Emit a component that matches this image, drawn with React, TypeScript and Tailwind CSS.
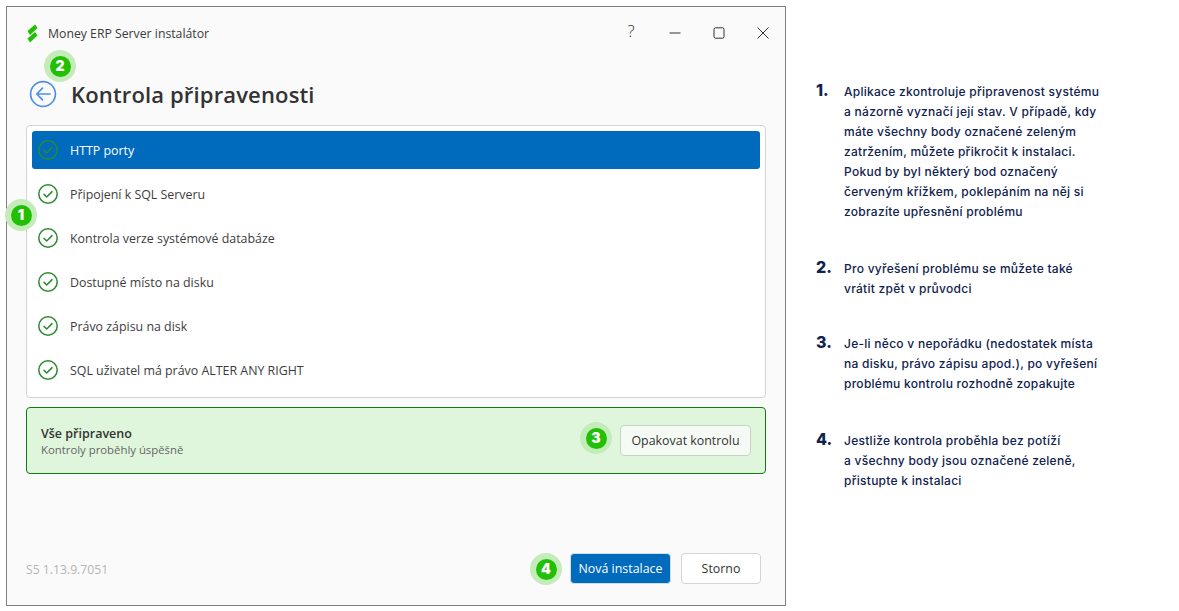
import React from "react";

const ui = "font-['Open_Sans','Noto_Sans',sans-serif]";

function Check() {
  return (
    <svg width="20" height="20" viewBox="0 0 20 20" fill="none" className="shrink-0">
      <circle cx="10" cy="10" r="9.2" stroke="#2b8a2f" strokeWidth="1.5" />
      <path d="M6 10.4l2.7 2.6L14 7.6" stroke="#2b8a2f" strokeWidth="1.5" strokeLinecap="round" strokeLinejoin="round" />
    </svg>
  );
}

function Badge({ n, className }: { n: string; className: string }) {
  return (
    <div className={`absolute w-8 h-8 rounded-full bg-[#c4ecba] flex items-center justify-center ${className}`}>
      <div className="w-[21px] h-[21px] rounded-full bg-[#22c004] flex items-center justify-center text-white text-[14px] font-black leading-none font-['Inter',sans-serif]">
        {n}
      </div>
    </div>
  );
}

const rows = [
  "HTTP porty",
  "Připojení k SQL Serveru",
  "Kontrola verze systémové databáze",
  "Dostupné místo na disku",
  "Právo zápisu na disk",
  "SQL uživatel má právo ALTER ANY RIGHT",
];

const notes: { n: string; lines: string[]; cls: string }[] = [
  {
    n: "1.",
    cls: "mt-[76px]",
    lines: [
      "Aplikace zkontroluje připravenost systému",
      "a názorně vyznačí její stav. V případě, kdy",
      "máte všechny body označené zeleným",
      "zatržením, můžete přikročit k instalaci.",
      "Pokud by byl některý bod označený",
      "červeným křížkem, poklepáním na něj si",
      "zobrazíte upřesnění problému",
    ],
  },
  { n: "2.", cls: "mt-[37px]", lines: ["Pro vyřešení problému se můžete také", "vrátit zpět v průvodci"] },
  {
    n: "3.",
    cls: "mt-[35px]",
    lines: ["Je-li něco v nepořádku (nedostatek místa", "na disku, právo zápisu apod.), po vyřešení", "problému kontrolu rozhodně zopakujte"],
  },
  {
    n: "4.",
    cls: "mt-[37px]",
    lines: ["Jestliže kontrola proběhla bez potíží", "a všechny body jsou označené zeleně,", "přistupte k instalaci"],
  },
];

export default function App() {
  return (
    <div className={`relative w-[1179px] h-[611px] bg-white overflow-hidden flex items-start pl-[6px] pt-[6px] ${ui}`}>
      <div className="relative w-[780px] h-[600px] shrink-0 border border-[#7f7f7f] bg-[#fafafa] flex flex-col pl-[19px] pr-[19px]">
        <div className="flex items-center h-[36px] mt-[9px] text-[#333]">
          <svg width="12" height="20" viewBox="0 0 12 20" className="shrink-0 ml-[1px]">
            <path d="M0.5 7L8 0.5 10.5 4 3 11Z" fill="#22c004" />
            <path d="M0.5 14.5L8 8 10.5 11.5 3 18.5Z" fill="#22c004" />
          </svg>
          <span className="ml-[9px] text-[12.25px] leading-none text-[#3a3a3a]">Money ERP Server instalátor</span>
          <div className="ml-auto flex items-center h-[30px] mr-[-19px]">
            <span className="w-[44px] text-center text-[17px] font-light leading-none text-[#333] mt-[-8px]">?</span>
            <div className="w-[44px] flex justify-center mt-[-3px]">
              <svg width="12" height="12" viewBox="0 0 12 12"><path d="M0.5 6h11" stroke="#333" strokeWidth="1" /></svg>
            </div>
            <div className="w-[44px] flex justify-center mt-[-3px]">
              <svg width="12" height="12" viewBox="0 0 12 12"><rect x="1" y="0.8" width="10" height="10.4" rx="1.5" fill="none" stroke="#333" strokeWidth="1" /></svg>
            </div>
            <div className="w-[44px] flex justify-center mt-[-3px]">
              <svg width="12" height="12" viewBox="0 0 12 12"><path d="M0.5 0.5l11 11M11.5 0.5l-11 11" stroke="#333" strokeWidth="1" /></svg>
            </div>
          </div>
        </div>

        <div className="flex items-center mt-[22px] h-[40px]">
          <svg width="28" height="28" viewBox="0 0 28 28" fill="none" className="ml-[3px] shrink-0">
            <circle cx="14" cy="14" r="12.4" stroke="#4f8fe6" strokeWidth="1.7" />
            <path d="M21 14H8M13.5 8.2L7.8 14l5.7 5.8" stroke="#4f8fe6" strokeWidth="1.7" strokeLinecap="round" strokeLinejoin="round" />
          </svg>
          <h1 className="ml-[14px] text-[22px] font-semibold leading-none text-[#333] tracking-[0.15px]">Kontrola připravenosti</h1>
        </div>

        <div className="mt-[11px] h-[273px] rounded-[4px] border border-[#d4d4d4] bg-white px-[5px] pt-[5px] flex flex-col gap-[6px]">
          {rows.map((r, i) => (
            <div key={r} className={`h-[38px] shrink-0 rounded-[3px] flex items-center pl-[6px] ${i === 0 ? "bg-[#006abd] text-white" : "text-[#3d3d3d]"}`}>
              <Check />
              <span className="ml-[12px] text-[12.4px] leading-none mt-[3px]">{r}</span>
            </div>
          ))}
        </div>

        <div className="mt-[9px] h-[67px] rounded-[4px] border border-[#107c10] bg-[#dff6dd] flex items-center pl-[14px] pr-[14px]">
          <div className="flex flex-col mt-[2px]">
            <span className="text-[12.5px] leading-[16px] font-semibold text-[#333]">Vše připraveno</span>
            <span className="text-[11.35px] leading-[16px] text-[#666]">Kontroly proběhly úspěšně</span>
          </div>
          <button className="ml-auto w-[131px] h-[31px] rounded-[4px] border border-[#c5d6c3] bg-[#f5fbf4] text-[12.4px] text-[#333] pt-[2px]">Opakovat kontrolu</button>
        </div>

        <div className="mt-[79px] flex items-center h-[31px]">
          <span className="text-[12.2px] text-[#b5b5b5] mt-[3px]">S5 1.13.9.7051</span>
          <button className="ml-auto w-[101px] h-[31px] rounded-[4px] border border-[#cfdfea] bg-[#006abd] text-white text-[12.4px] pt-[1px]">Nová instalace</button>
          <button className="ml-[10px] mr-[5px] w-[80px] h-[31px] rounded-[4px] border border-[#d4d4d4] bg-white text-[#333] text-[12.4px] pt-[1px]">Storno</button>
        </div>
      </div>

      <div className="ml-[30px] flex flex-col font-['Inter',sans-serif] text-[#10224e]">
        {notes.map((nt) => (
          <div key={nt.n} className={`flex ${nt.cls}`}>
            <span className="w-[28px] text-[16px] font-extrabold leading-[20px] mt-[-2px]">{nt.n}</span>
            <div className="text-[12px] tracking-[0.27px] font-medium leading-[20px] whitespace-nowrap">
              {nt.lines.map((l) => (
                <div key={l}>{l}</div>
              ))}
            </div>
          </div>
        ))}
      </div>

      <Badge n="1" className="left-[5px] top-[199px]" />
      <Badge n="2" className="left-[44px] top-[50px]" />
      <Badge n="3" className="left-[580px] top-[422px]" />
      <Badge n="4" className="left-[530px] top-[553px]" />
    </div>
  );
}
